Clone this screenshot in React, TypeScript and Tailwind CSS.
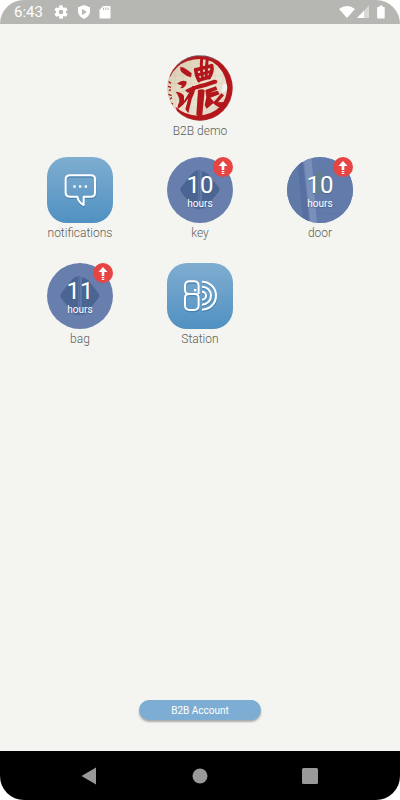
import type { ReactNode } from "react";

function StatusBar() {
  return (
    <header className="flex h-6 shrink-0 items-center justify-between bg-[#b6b7b2] pr-3 pl-[14px] text-white">
      <div className="flex items-center gap-2">
        <span className="mr-[2px] text-[15px] leading-[26px]">6:43</span>
        <svg className="size-4" viewBox="0 0 24 24" fill="currentColor" aria-hidden="true">
          <path d="M19.4 13a7.500 7.500 0 0 0 0-2l2.100-1.700a.5.5 0 0 0 .1-.6l-2-3.500a.5.500 0 0 0-.6-.2l-2.500 1a7.300 7.300 0 0 0-1.700-1l-.4-2.600A.5.500 0 0 0 14 2h-4a.5.500 0 0 0-.5.400l-.4 2.700a7.700 7.700 0 0 0-1.700 1l-2.500-1a.5.500 0 0 0-.6.200l-2 3.400a.5.500 0 0 0 .1.600L4.600 11a7.500 7.500 0 0 0 0 2l-2.100 1.700a.5.500 0 0 0-.1.600l2 3.500c.1.200.4.300.6.200l2.500-1a7.300 7.300 0 0 0 1.700 1l.4 2.600c0 .2.200.4.500.4h4c.2 0 .5-.2.500-.4l.4-2.600a7.700 7.700 0 0 0 1.700-1l2.500 1c.2.100.5 0 .6-.2l2-3.500a.5.500 0 0 0-.1-.6ZM12 15.500a3.500 3.500 0 1 1 0-7 3.500 3.500 0 0 1 0 7Z" />
        </svg>
        <svg className="h-4 w-[14px]" viewBox="0 0 14 16" aria-hidden="true">
          <path d="M7 1l6 2.300v4c0 3.300-2.500 6-6 7.700-3.500-1.700-6-4.400-6-7.700v-4z" fill="#fff" />
          <path d="M5 5l5 3-5 3z" fill="#b6b7b2" />
        </svg>
        <svg className="h-4 w-3" viewBox="0 0 12 16" aria-hidden="true">
          <path d="M4 2h6.500Q11.500 2 11.500 3v10.500q0 1-1 1h-9q-1 0-1-1V6z" fill="#fff" />
          <path d="M4.500 3.500V6M6.800 3.500V6M9.100 3.500V6" stroke="#b6b7b2" strokeWidth="1" />
        </svg>
      </div>
      <svg className="h-4 w-[50px]" viewBox="0 0 50 16" aria-hidden="true">
        <path d="M1 5Q9 -1 17 5L9 14z" fill="#fff" />
        <path d="M31 1.500V14H19z" fill="#d9dad7" />
        <path d="M26 6.700V14H19z" fill="#fff" />
        <path d="M41.500 1.500h3V3h1.500q.700 0 .7.700v10q0 .8-.8.800h-6q-.8 0-.8-.8v-10q0-.7.700-.7h1.700z" fill="#fff" />
      </svg>
    </header>
  );
}

function SealLogo() {
  return (
    <svg className="size-[66px]" viewBox="36 32 198 198" role="img" aria-label="B2B demo seal">
      <defs>
        <clipPath id="seal">
          <circle cx="135" cy="131" r="98" />
        </clipPath>
        <linearGradient id="paper" x1="0" y1="0" x2="1" y2="1">
          <stop offset="0" stopColor="#d3c7aa" />
          <stop offset="0.500" stopColor="#ebe3d0" />
          <stop offset="1" stopColor="#dcd5c5" />
        </linearGradient>
      </defs>
      <g clipPath="url(#seal)">
        <rect x="36" y="32" width="198" height="198" fill="url(#paper)" />
        <path d="M60 32V230M84 32V230M108 32V230M132 32V230M156 32V230M180 32V230M204 32V230M36 70H234M36 94H234M36 118H234M36 142H234M36 166H234M36 190H234" stroke="#bcae90" strokeWidth="1" opacity="0.500" />
        <path d="M44 100Q62 62 98 50Q140 37 172 52Q210 76 216 124Q218 160 196 186Q172 212 128 214Q92 214 62 188L70 214L134 234L200 214L236 160V90L190 34H90L44 70Z" fill="#b5161b" />
        <path d="M41 112l7 5M39 126l9 3M42 139l6-3M40 150l10 4M45 164l6-4M49 176l5 4" stroke="#b5161b" strokeWidth="4" />
        <g fill="#b3161b">
          <path d="M76 67Q93 70 110 87L108 99Q93 96 80 84Q74 75 76 67Z" />
          <path d="M66 118Q79 106 94 111Q98 120 84 131L75 132L82 124Z" />
          <path d="M62 142Q83 144 87 155L87 170Q100 150 113 124L122 128Q119 148 110 164L100 207L91 195L100 162Q84 185 67 195L69 182Q80 165 62 142Z" />
          <path d="M90 138Q106 126 151 115L177 106Q192 106 185 117Q157 128 125 135L98 145Z" />
          <path d="M129 137Q145 132 149 139L142 212Q132 221 124 211Z" />
          <path d="M151 137L183 126L187 136L164 145L188 139L194 150L166 160L177 172L199 147L207 153L189 174L210 173L207 187Q190 193 175 177L155 193L149 183L154 159Z" />
        </g>
        <g fill="none" stroke="#b3161b" strokeLinecap="round" strokeLinejoin="round">
          <path d="M122 76Q123 92 132 109M124 76L170 64Q174 82 162 100M132 107L162 99" strokeWidth="11" />
          <path d="M140 44Q137 76 143 102M157 43Q153 75 154 98M127 92L166 82" strokeWidth="9" />
        </g>
        <path d="M204 116Q221 115 216 138Q207 148 199 143Z" fill="#fff" opacity="0.600" />
      </g>
      <path d="M70 60Q123 15 180 46" fill="none" stroke="#58658c" strokeWidth="2" />
      <circle cx="135" cy="131" r="97" fill="none" stroke="#8f8177" strokeWidth="1" opacity="0.600" />
    </svg>
  );
}

function Item({ label, children }: { label: string; children: ReactNode }) {
  return (
    <button type="button" className="flex flex-col items-center">
      {children}
      <span className="text-[12px] leading-[21px] font-light text-[#5c5d5a]">{label}</span>
    </button>
  );
}

function AppTile({ children }: { children: ReactNode }) {
  return (
    <span className="size-[66px] rounded-[20px] bg-linear-to-b from-[#7fadd0] to-[#5091c2]">
      <svg className="size-full" viewBox="36 37 198 198" fill="none" strokeLinejoin="round" aria-hidden="true">
        {children}
      </svg>
    </span>
  );
}

function ChatGlyph() {
  const bubble = "M106 92H168Q180 92 180 104V144Q180 156 168 156H146V181Q130 173 127 156H106Q92 156 92 144V104Q92 92 106 92Z";
  return (
    <>
      <path d={bubble} stroke="#3d79a8" strokeWidth="6" transform="translate(1 4)" opacity="0.700" />
      <path d={bubble} stroke="#fff" strokeWidth="6" />
      <g fill="#fff">
        <rect x="115" y="122" width="7" height="7" />
        <rect x="132" y="122" width="7" height="7" />
        <rect x="149" y="122" width="7" height="7" />
      </g>
    </>
  );
}

function StationGlyph() {
  const mark =
    "M131 130V106Q131 92 117 92H104Q90 92 90 106V118Q90 130 102 130H120Q131 130 131 142V164Q131 178 117 178H104Q90 178 90 164V148M141 93A42 42 0 0 1 141 177M141 108A27 27 0 0 1 141 162M141 123A12 12 0 0 1 141 147M90 164V142Q90 130 102 130";
  return (
    <>
      <path d={mark} stroke="#3d79a8" strokeWidth="6" transform="translate(1 4)" opacity="0.700" />
      <path d={mark} stroke="#fff" strokeWidth="6" />
      <rect x="117" y="115" width="7" height="7" fill="#fff" />
    </>
  );
}

function DiamondBackdrop() {
  return (
    <g fill="#4b6592">
      <path d="M130 76V194Q120 193 110 183L79 143Q73 135 79 127L110 88Q120 77 130 76Z" />
      <path d="M140 78V193Q150 190 159 180L190 143Q196 135 190 127L159 88Q150 80 140 78Z" />
      <path d="M134 76V195" stroke="#526d9c" strokeWidth="4" />
    </g>
  );
}

function DoorBackdrop() {
  return (
    <>
      <path d="M36 37H82L105 235H36Z" fill="#607aa8" />
      <path d="M66 37H82L102 235H84Z" fill="#5770a1" />
      <path d="M86 37H110L126 235H106Z" fill="#7a90ba" />
      <path d="M110 37H234V235H126Z" fill="#627bab" />
      <path d="M122 86Q134 74 145 85V96L153 101V133Q138 155 122 146L114 130V104L122 98Z" fill="#637e8d" />
      <path d="M128 190L190 182M126 205L200 208" stroke="#5a72a3" strokeWidth="2" />
    </>
  );
}

function TimerDisc({ value, children }: { value: number; children: ReactNode }) {
  return (
    <span className="relative size-[66px]">
      <span className="grid size-full place-items-center overflow-hidden rounded-full bg-[#687fad]">
        <svg className="col-start-1 row-start-1 size-full" viewBox="36 37 198 198" aria-hidden="true">
          {children}
        </svg>
        <span className="z-10 col-start-1 row-start-1 flex flex-col items-center pt-px text-white [text-shadow:0_1px_1px_#4b6592]">
          <span className="text-[24px] leading-[26px]">{value}</span>
          <span className="text-[10px] leading-3">hours</span>
        </span>
      </span>
      <span className="absolute top-0 right-0 z-20 size-5 rounded-full bg-[#e74444]">
        <svg className="size-full" viewBox="0 0 20 20" fill="#fff" aria-hidden="true">
          <path d="M10 4L14.500 9H11.300V13H8.700V9H5.500Z" />
          <rect x="8.700" y="14" width="2.600" height="1.200" />
          <rect x="8.700" y="16" width="2.600" height="1" />
        </svg>
      </span>
    </span>
  );
}

function NavigationBar() {
  return (
    <nav className="flex h-[49px] shrink-0 items-center justify-center gap-[86px] bg-black">
      <button type="button" aria-label="Back" className="size-6">
        <svg className="size-6" viewBox="0 0 24 24" fill="#999">
          <path d="M18 3.500V20.500L3.500 12Z" />
        </svg>
      </button>
      <button type="button" aria-label="Home" className="size-6">
        <svg className="size-6" viewBox="0 0 24 24" fill="#999">
          <circle cx="12" cy="12" r="7.500" />
        </svg>
      </button>
      <button type="button" aria-label="Recent apps" className="size-6">
        <svg className="size-6" viewBox="0 0 24 24" fill="#999">
          <rect x="4" y="4" width="16" height="16" rx="1.500" />
        </svg>
      </button>
    </nav>
  );
}

export default function App() {
  return (
    <div className="min-h-screen bg-white font-[Roboto,'Liberation_Sans',sans-serif]">
      <div className="flex min-h-screen flex-col overflow-hidden rounded-[24px] bg-[#f4f5f0]">
        <StatusBar />
        <main className="flex grow flex-col items-center px-5 pt-[31px] pb-[31px]">
          <Item label="B2B demo">
            <SealLogo />
          </Item>
          <div className="mt-[15px] grid w-full grid-cols-3 gap-y-[19px]">
            <Item label="notifications">
              <AppTile>
                <ChatGlyph />
              </AppTile>
            </Item>
            <Item label="key">
              <TimerDisc value={10}>
                <DiamondBackdrop />
              </TimerDisc>
            </Item>
            <Item label="door">
              <TimerDisc value={10}>
                <DoorBackdrop />
              </TimerDisc>
            </Item>
            <Item label="bag">
              <TimerDisc value={11}>
                <DiamondBackdrop />
              </TimerDisc>
            </Item>
            <Item label="Station">
              <AppTile>
                <StationGlyph />
              </AppTile>
            </Item>
          </div>
          <button
            type="button"
            className="mt-auto h-5 w-[122px] rounded-full bg-[#7dadd2] pt-px text-[10px] leading-4 text-white shadow-[0_2px_2px_#aaa]"
          >
            B2B Account
          </button>
        </main>
        <NavigationBar />
      </div>
    </div>
  );
}
